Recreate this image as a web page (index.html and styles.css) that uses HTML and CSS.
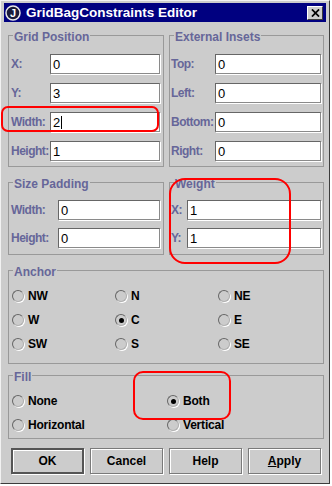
FILE: index.html
```html
<!DOCTYPE html>
<html>
<head>
<meta charset="utf-8">
<link rel="stylesheet" href="styles.css">
</head>
<body>
<div class="window">
  <div class="titlebar">
    <svg class="app-icon" viewBox="0 0 16 16">
      <circle cx="8" cy="8" r="7" fill="#1a1a3a" stroke="#e8e8e8" stroke-width="1.5"/>
      <text x="8" y="12.2" text-anchor="middle" font-family="Liberation Sans" font-weight="bold" font-size="11" fill="#fff">J</text>
    </svg>
    <span class="title">GridBagConstraints Editor</span>
    <div class="close">
      <svg viewBox="0 0 10 9" class="close-x"><path d="M1 0.5 L9 8.5 M9 0.5 L1 8.5" stroke="#000" stroke-width="2"/></svg>
    </div>
  </div>

  <div class="content">
    <div class="pair">
      <div class="group">
        <span class="group-title">Grid Position</span>
        <div class="fields fields-gp">
          <span class="lab">X:</span><div class="field">0</div>
          <span class="lab">Y:</span><div class="field">3</div>
          <span class="lab">Width:</span><div class="field">2<span class="caret"></span></div>
          <span class="lab">Height:</span><div class="field">1</div>
        </div>
      </div>
      <div class="group">
        <span class="group-title">External Insets</span>
        <div class="fields fields-ei">
          <span class="lab">Top:</span><div class="field">0</div>
          <span class="lab">Left:</span><div class="field">0</div>
          <span class="lab">Bottom:</span><div class="field">0</div>
          <span class="lab">Right:</span><div class="field">0</div>
        </div>
      </div>
    </div>

    <div class="pair pair2">
      <div class="group">
        <span class="group-title">Size Padding</span>
        <div class="fields fields-sp">
          <span class="lab">Width:</span><div class="field">0</div>
          <span class="lab">Height:</span><div class="field">0</div>
        </div>
      </div>
      <div class="group">
        <span class="group-title">Weight</span>
        <div class="fields fields-w">
          <span class="lab">X:</span><div class="field">1</div>
          <span class="lab">Y:</span><div class="field">1</div>
        </div>
      </div>
    </div>

    <div class="group anchor">
      <span class="group-title">Anchor</span>
      <div class="radios radios-3">
        <label class="radio"><span class="dot"></span>NW</label>
        <label class="radio"><span class="dot"></span>N</label>
        <label class="radio"><span class="dot"></span>NE</label>
        <label class="radio"><span class="dot"></span>W</label>
        <label class="radio"><span class="dot on"></span>C</label>
        <label class="radio"><span class="dot"></span>E</label>
        <label class="radio"><span class="dot"></span>SW</label>
        <label class="radio"><span class="dot"></span>S</label>
        <label class="radio"><span class="dot"></span>SE</label>
      </div>
    </div>

    <div class="group fill">
      <span class="group-title">Fill</span>
      <div class="radios radios-2">
        <label class="radio"><span class="dot"></span>None</label>
        <label class="radio"><span class="dot on"></span>Both</label>
        <label class="radio"><span class="dot"></span>Horizontal</label>
        <label class="radio"><span class="dot"></span>Vertical</label>
      </div>
    </div>

    <div class="buttons">
      <div class="btn default">OK</div>
      <div class="btn">Cancel</div>
      <div class="btn">Help</div>
      <div class="btn"><u>A</u>pply</div>
    </div>
  </div>

  <div class="mark mark-width"></div>
  <div class="mark mark-weight"></div>
  <div class="mark mark-both"></div>
</div>
</body>
</html>
```

FILE: styles.css
```css
* { box-sizing: border-box; }

body {
  margin: 0;
  background: #ffffff;
  font-family: "Liberation Sans", Arial, sans-serif;
}

.window {
  position: relative;
  width: 330px;
  height: 484px;
  background: #cccccc;
  border: 1px solid;
  border-color: #f2f2f2 #3c3c3c #3c3c3c #f2f2f2;
  padding: 2px 3px;
}

.titlebar {
  height: 19px;
  background: #000080;
  display: flex;
  align-items: center;
  padding: 0 3px 0 1px;
}

.app-icon {
  width: 16px;
  height: 16px;
  flex: none;
}

.title {
  flex: 1;
  margin-left: 5px;
  color: #ffffff;
  font: bold 13.5px/19px "Liberation Sans", Arial, sans-serif;
  white-space: nowrap;
}

.close {
  width: 16px;
  height: 14px;
  flex: none;
  background: #cccccc;
  border: 1px solid;
  border-color: #ffffff #3c3c3c #3c3c3c #ffffff;
  display: flex;
  align-items: center;
  justify-content: center;
}

.close-x {
  width: 9px;
  height: 8px;
}

.content {
  padding: 13px 2px 0 4px;
}

.pair {
  display: grid;
  grid-template-columns: 156px 155px;
  column-gap: 5px;
}

.pair2 {
  margin-top: 15px;
}

.group {
  border: 1px solid #999999;
}

.group-title {
  display: block;
  width: fit-content;
  margin: -6px 0 0 4px;
  padding: 0 1px;
  background: #cccccc;
  color: #666699;
  font: bold 12px/14px "Liberation Sans", Arial, sans-serif;
}

.fields {
  display: grid;
  align-items: center;
  grid-auto-rows: 20px;
}

.fields-gp {
  grid-template-columns: 39px 1fr;
  row-gap: 9px;
  margin-top: 10px;
  padding: 0 3px 5px 2px;
}

.fields-ei {
  grid-template-columns: 44px 1fr;
  row-gap: 9px;
  margin-top: 10px;
  padding: 0 2px 5px 1px;
}

.fields-sp {
  grid-template-columns: 47px 1fr;
  row-gap: 8px;
  margin-top: 9px;
  padding: 0 3px 6px 2px;
}

.fields-w {
  grid-template-columns: 16px 1fr;
  row-gap: 8px;
  margin-top: 9px;
  padding: 0 2px 6px 1px;
}

.lab {
  color: #666699;
  font: bold 12px "Liberation Sans", Arial, sans-serif;
  letter-spacing: -0.5px;
  white-space: nowrap;
}

.field {
  height: 20px;
  background: #ffffff;
  border: 1px solid;
  border-color: #666666 #8a8a8a #8a8a8a #666666;
  box-shadow: 1px 1px 0 #ffffff;
  padding-left: 2px;
  display: flex;
  align-items: center;
  color: #000000;
  font: 13px "Liberation Sans", Arial, sans-serif;
}

.caret {
  display: inline-block;
  width: 1px;
  height: 13px;
  background: #000000;
  margin-left: 1px;
}

.anchor {
  margin-top: 15px;
}

.fill {
  margin-top: 11px;
}

.radios {
  display: grid;
  grid-auto-rows: 24px;
  margin-top: 5px;
  padding-left: 3px;
}

.radios-3 {
  grid-template-columns: repeat(3, 103px);
  padding-bottom: 7px;
}

.radios-2 {
  grid-template-columns: repeat(2, 155px);
  padding-bottom: 1px;
}

.radio {
  display: flex;
  align-items: center;
  gap: 4px;
  color: #000000;
  font: bold 12px "Liberation Sans", Arial, sans-serif;
  letter-spacing: -0.2px;
  white-space: nowrap;
}

.dot {
  width: 12px;
  height: 12px;
  flex: none;
  border-radius: 50%;
  border: 1px solid;
  border-color: #666666 #b0b0b0 #b0b0b0 #666666;
  box-shadow: 1px 1px 0 #ffffff;
  display: flex;
  align-items: center;
  justify-content: center;
}

.dot.on::after {
  content: "";
  width: 5px;
  height: 5px;
  border-radius: 50%;
  background: #000000;
}

.buttons {
  display: grid;
  grid-template-columns: repeat(4, 73px);
  column-gap: 6px;
  margin-top: 9px;
  padding-left: 3px;
}

.btn {
  height: 26px;
  display: flex;
  align-items: center;
  justify-content: center;
  background: #cccccc;
  border: 1px solid #7a7a7a;
  box-shadow: inset 1px 1px 0 #ffffff, 1px 1px 0 #ffffff;
  color: #000000;
  font: bold 12px "Liberation Sans", Arial, sans-serif;
}

.btn.default {
  border: 2px solid #555555;
}

.mark {
  position: absolute;
  border: 2px solid #ff0000;
}

.mark-width {
  left: 0;
  top: 105px;
  width: 158px;
  height: 26px;
  border-radius: 7px;
}

.mark-weight {
  left: 168px;
  top: 177px;
  width: 122px;
  height: 86px;
  border-radius: 16px;
}

.mark-both {
  left: 132px;
  top: 370px;
  width: 98px;
  height: 49px;
  border-radius: 10px;
}
```
